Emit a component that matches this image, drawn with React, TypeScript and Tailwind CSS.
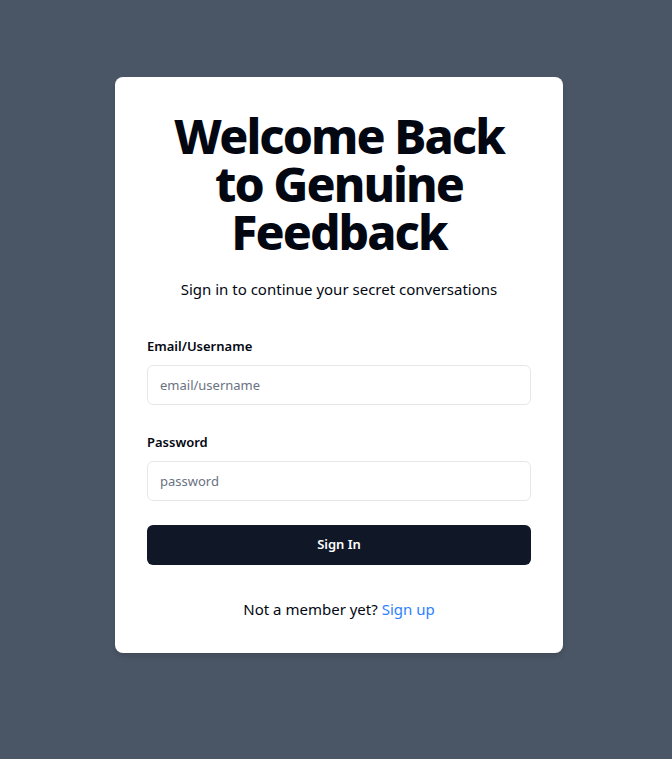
import React from 'react';

const font = { fontFamily: '"Noto Sans", "Open Sans", sans-serif' };

export default function App() {
  return (
    <div className="min-h-screen bg-gray-600 flex justify-center pt-[77px] pl-[6px]" style={font}>
      <div className="w-full max-w-md h-fit bg-white rounded-lg shadow-md p-8">
        <div className="text-center">
          <h1 className="pt-[3px] text-5xl leading-[48px] font-extrabold tracking-[-0.04em] text-gray-950">
            Welcome Back to Genuine Feedback
          </h1>
          <p className="mt-[21px] text-[15px] leading-6 text-gray-950">Sign in to continue your secret conversations</p>
        </div>
        <form className="mt-[35px]" onSubmit={(e) => e.preventDefault()}>
          <label className="block text-[13px] leading-5 font-semibold text-gray-950">Email/Username</label>
          <input
            className="mt-[9px] w-full h-10 rounded-md border border-gray-200 px-3 text-[13px] placeholder:text-gray-500 outline-none"
            placeholder="email/username"
          />
          <label className="mt-[27px] block text-[13px] leading-5 font-semibold text-gray-950">Password</label>
          <input
            type="password"
            className="mt-[9px] w-full h-10 rounded-md border border-gray-200 px-3 text-[13px] placeholder:text-gray-500 outline-none"
            placeholder="password"
          />
          <button
            type="submit"
            className="mt-6 w-full h-10 rounded-md bg-gray-900 text-white text-[13px] font-semibold"
          >
            Sign In
          </button>
        </form>
        <div className="mt-8 text-center text-[15px] leading-6 text-gray-950">
          Not a member yet?{' '}
          <a href="#" className="text-blue-500">
            Sign up
          </a>
        </div>
      </div>
    </div>
  );
}
